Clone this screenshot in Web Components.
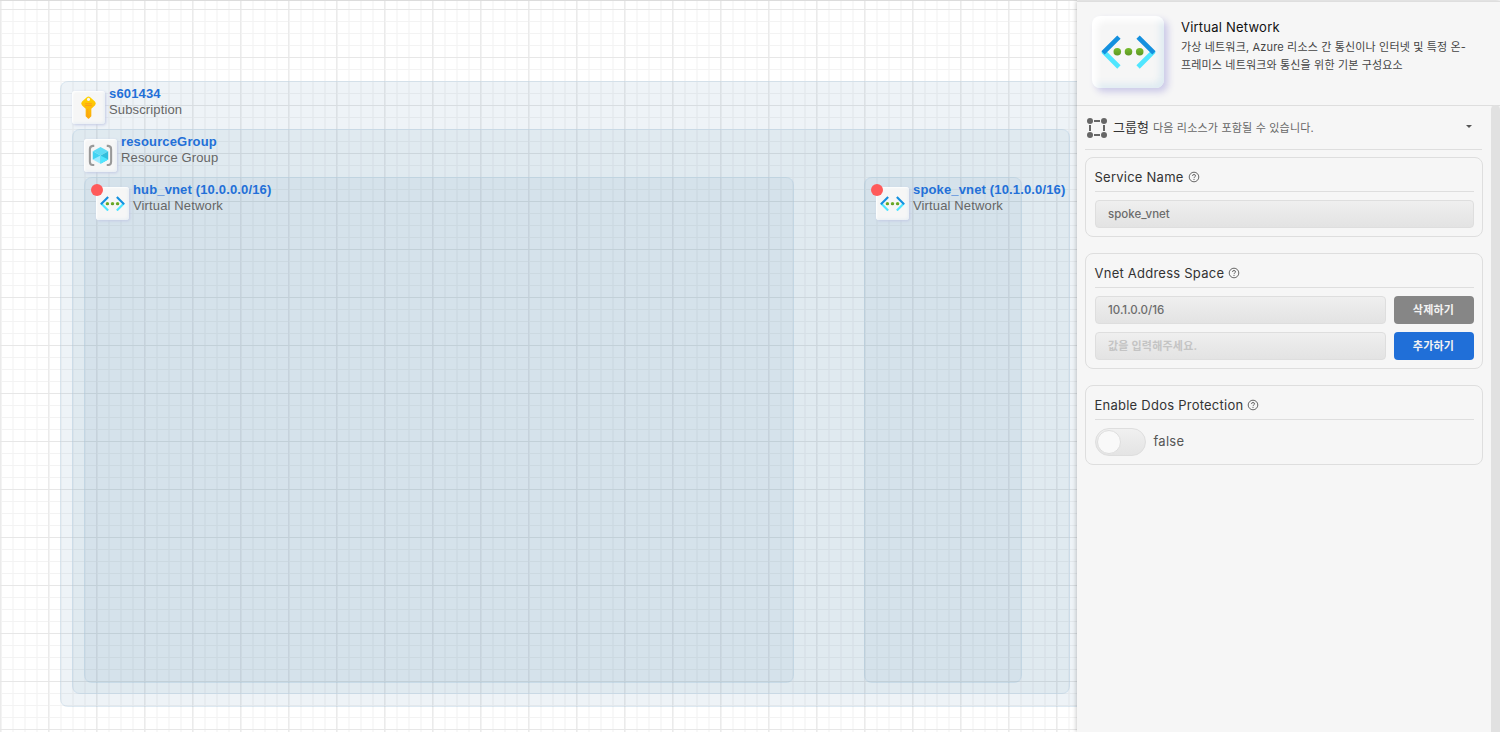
<!DOCTYPE html>
<html lang="ko">
<head>
<meta charset="utf-8">
<title>Virtual Network</title>
<style>
body{margin:0;width:1500px;height:732px;overflow:hidden;font-family:Inter,"Noto Sans CJK KR",sans-serif}
</style>
</head>
<body>
<architect-app></architect-app>
<script>
const define = (name, render) => customElements.define(name, class extends HTMLElement {
  constructor() {
    super();
    this.attachShadow({mode: 'open'});
  }
  connectedCallback() {
    const t = document.createElement('template');
    t.innerHTML = '<style>*{box-sizing:border-box}</style>' + render(this);
    this.shadowRoot.replaceChildren(t.content.cloneNode(true));
  }
});

const glyphs = {
  vnet: `<svg viewBox="0 0 54 34"><defs><linearGradient id="g" x1="0" y1="0" x2="0" y2="1"><stop offset="0" stop-color="#76bc2d"/><stop offset="1" stop-color="#5e9624"/></linearGradient></defs>
    <g fill="none" stroke-width="4.6" stroke-linecap="butt" stroke-linejoin="round"><path d="M17.6 31.4 2 15.8M36.4 31.4 52 15.8" stroke="#50e6ff"/><path d="M17.6 2 2 17.6M36.4 2 52 17.6" stroke="#1490df"/></g>
    <g fill="url(#g)"><circle cx="16" cy="16.5" r="3.7"/><circle cx="27" cy="16.5" r="3.7"/><circle cx="38" cy="16.5" r="3.7"/></g></svg>`,
  key: `<svg viewBox="0 0 18 26"><defs><linearGradient id="k" x1="0" y1="0" x2="0" y2="1"><stop offset="0" stop-color="#ffd400"/><stop offset="1" stop-color="#fba80c"/></linearGradient></defs>
    <path fill="url(#k)" fill-rule="evenodd" d="M7.2 2.4Q9 1 10.8 2.4L15.8 7Q17.6 9 16 10.8L12 14.6V22.6L9.6 25Q9 25.5 8.4 25L6 22.6V14.6L2 10.8Q.4 9 2.2 7ZM9 3a1.7 1.7 0 1 0 .01 0Z"/><path d="M5.4 9.3h7.2M5.4 11.2h7.2" stroke="#ff9a1a" stroke-width="1"/><path d="M8.1 15v8" stroke="#ff9f10" stroke-width=".9"/></svg>`,
  group: `<svg viewBox="0 0 24 22"><path d="M6 1.8H4.6Q1.8 2 1.8 5V17Q1.8 20 4.6 20.2H6M18 1.8H19.4Q22.2 2 22.2 5V17Q22.2 20 19.4 20.2H18" fill="none" stroke="#999" stroke-width="2"/>
    <path d="M12 3 19.4 7 12 11 4.6 7Z" fill="#5fdcf5"/><path d="M4.6 7 12 11V19L4.6 15Z" fill="#9cebff"/><path d="M19.4 7 12 11V19L19.4 15Z" fill="#32bedd"/><path d="M4.6 7 12 11 4.6 15Z" fill="#40d3f2"/><path d="M12 11 19.4 15 12 19Z" fill="#50e6ff"/></svg>`
};

define('service-icon', el => {
  const big = el.hasAttribute('large');
  const w = {vnet: big ? 55 : 25, key: 17, group: 25}[el.getAttribute('name')];
  return `<style>
  :host{display:flex;align-items:center;justify-content:center;flex:none;background:#f6f6f6;
    width:${big ? 72 : 33}px;height:${big ? 72 : 33}px;border-radius:${big ? 8 : 3}px;
    box-shadow:${big ? '4px 4px 7px #cbc9e8,inset 5px 5px 6px #fff,inset -4px -4px 7px #deebf2' : '1px 1px 3px #c3cae4,inset 1px 1px 2px #fff,inset -1px -1px 3px #e6eef4'}}
  svg{display:block;width:${w}px}
  </style>${glyphs[el.getAttribute('name')]}`;
});

define('resource-node', el => {
  const a = n => el.getAttribute(n);
  return `<style>
  :host{display:block;position:absolute;left:${a('x')}px;top:${a('y')}px;width:${a('w')}px;height:${a('h')}px;box-sizing:border-box;
    background:rgba(85,138,175,${a('tint')});border:1px solid rgba(150,190,220,.2);border-radius:8px}
  .head{display:flex;gap:4px;padding:9px 0 0 11px}
  .text{font:13px/16px "Liberation Sans",Arial,sans-serif;color:#666;white-space:nowrap;margin-top:-5px}
  b{display:block;color:#2370d8;letter-spacing:.15px}
  span{display:block;letter-spacing:.14px}
  i{position:absolute;left:6px;top:6px;width:12px;height:12px;border-radius:50%;background:#ff5a5a}
  </style><div class="head"><service-icon name="${a('icon')}"></service-icon><div class="text"><b>${a('label')}</b><span>${a('kind')}</span></div></div>${el.hasAttribute('alert') ? '<i></i>' : ''}`;
});

define('diagram-canvas', () => `<style>
  :host{display:block;position:relative;overflow:hidden;background:#fff;border-top:1px solid #dcdcdc}
  .grid{position:absolute;inset:0;background:
    linear-gradient(#e7e7e7 1px,transparent 1px) 0 8px/48px 48px,
    linear-gradient(90deg,#ebebeb 1px,#f3f3f3 1px 2px,transparent 2px) 0 0/48px 48px,
    linear-gradient(#f3f3f3 1px,transparent 1px) 0 8px/12px 12px,
    linear-gradient(90deg,#f8f8f8 2px,transparent 2px) 0 0/12px 12px}
  </style><div class="grid"></div>
  <resource-node x="60" y="80" w="1030" h="626" tint=".1" icon="key" label="s601434" kind="Subscription"></resource-node>
  <resource-node x="72" y="128" w="998" h="565" tint=".085" icon="group" label="resourceGroup" kind="Resource Group"></resource-node>
  <resource-node x="84" y="176" w="710" h="506" tint=".075" icon="vnet" label="hub_vnet (10.0.0.0/16)" kind="Virtual Network" alert></resource-node>
  <resource-node x="864" y="176" w="158" h="506" tint=".075" icon="vnet" label="spoke_vnet (10.1.0.0/16)" kind="Virtual Network" alert></resource-node>`);

define('panel-header', () => `<style>
  :host{display:flex;gap:17px;height:104px;padding:14px 15px 0;border-bottom:1px solid #dedede}
  h1{margin:3px 0 3px;font-size:13px;line-height:16px;font-weight:400;color:#111;letter-spacing:.22px}
  p{margin:0;font-size:11px;line-height:18px;color:#444;letter-spacing:.16px;white-space:nowrap}
  </style><service-icon large name="vnet"></service-icon><div><h1><slot name="title"></slot></h1><p><slot></slot></p></div>`);

define('group-summary', () => `<style>
  :host{display:flex;align-items:center;height:44px;border-bottom:1px solid #dedede;padding:0 10px 0 1px;margin-right:1px;white-space:nowrap}
  svg{flex:none;margin-top:1px}
  b{font-weight:400;font-size:13px;color:#333;margin:-3px 4px 0 5px}
  span{font-size:11px;color:#666;flex:1;margin-top:-2px;letter-spacing:.2px}
  .arrow{border:3.5px solid transparent;border-top-color:#555;border-bottom:0;margin-top:-2px}
  </style><svg width="22" height="22" viewBox="0 0 22 22" fill="#666"><circle cx="4" cy="4" r="3"/><circle cx="18" cy="4" r="3"/><circle cx="4" cy="18" r="3"/><circle cx="18" cy="18" r="3"/><path d="M8 3h6v2H8zM8 17h6v2H8zM3 8h2v6H3zM17 8h2v6h-2z"/></svg>
  <b>그룹형</b><span>다음 리소스가 포함될 수 있습니다.</span><div class="arrow"></div>`);

define('setting-card', el => `<style>
  :host{display:block;box-sizing:border-box;border:1px solid #dedede;border-radius:8px;padding:8px 8px 8px 9px}
  header{display:flex;align-items:center;gap:4px;height:26px;padding-bottom:3px;border-bottom:1px solid #dedede;margin-bottom:8px;font-size:13px;color:#333;letter-spacing:.24px}
  .body{display:grid;gap:8px}
  span{margin-left:-.5px}
  </style><header><span>${el.getAttribute('label')}</span><svg width="12" height="12" viewBox="0 0 12 12" fill="none" stroke="#555"><circle cx="6" cy="6" r="4.8" stroke-width=".9"/><path d="M4.5 4.9Q4.5 3.5 6 3.5T7.5 4.9Q7.5 5.5 6.7 6 6 6.4 6 7" stroke-width=".9"/><path d="M6 7.9v1" stroke-width="1"/></svg></header><div class="body"><slot></slot></div>`);

define('text-field', el => `<style>
  :host{display:flex;align-items:center;flex:1;box-sizing:border-box;height:28px;padding:0 12px 1px;border:1px solid #dedede;border-radius:4px;background:linear-gradient(#efefef,#e3e3e3);font-size:11.5px;font-weight:500;color:#6c6c6c}
  :host([empty]){padding-bottom:2px;font-size:11px;font-weight:700;letter-spacing:.22px;color:#c4c4c4}
  </style><slot></slot>`);

define('action-button', el => `<style>
  :host{display:flex;align-items:center;justify-content:center;flex:none;box-sizing:border-box;width:80px;height:28px;padding:0 1px 2px 0;border-radius:4px;background:${el.hasAttribute('primary') ? '#206fd8' : '#868686'};color:#f3f3f3;font-size:11px;font-weight:700;letter-spacing:.2px}
  </style><slot></slot>`);

define('field-row', () => `<style>:host{display:flex;gap:8px}</style><slot></slot>`);

define('toggle-switch', () => `<style>
  :host{display:flex;align-items:center;gap:7px;height:28px;font-size:13px;color:#555;letter-spacing:.25px}
  .track{width:51px;height:28px;border:1px solid #dedede;border-radius:14px;background:linear-gradient(#f0f0f0,#e4e4e4);padding:1px}
  .knob{width:24px;height:24px;border-radius:50%;background:#f9f9f9;border:1px solid #dedede}
  .value{margin-top:-2px;padding-left:.5px}
  </style><div class="track"><div class="knob"></div></div><div class="value"><slot></slot></div>`);

define('property-panel', () => `<style>
  :host{display:flex;flex-direction:column;background:#f6f6f6;border-top:1px solid #dedede;box-shadow:-1px 0 4px rgba(0,0,0,.2);margin-top:1px;position:relative}
  .content{display:flex;flex:1}
  .list{flex:1;padding:0 8px}
  .cards{display:grid;gap:16px;padding-top:7px}
  .bar{width:9px;margin-top:-1px;background:#e1e1e1;border-radius:5px 5px 0 0}
  </style>
  <panel-header><span slot="title">Virtual Network</span>가상 네트워크, Azure 리소스 간 통신이나 인터넷 및 특정 온-<br>프레미스 네트워크와 통신을 위한 기본 구성요소</panel-header>
  <div class="content"><div class="list"><group-summary></group-summary><div class="cards">
    <setting-card label="Service Name"><text-field>spoke_vnet</text-field></setting-card>
    <setting-card label="Vnet Address Space">
      <field-row><text-field>10.1.0.0/16</text-field><action-button>삭제하기</action-button></field-row>
      <field-row><text-field empty>값을 입력해주세요.</text-field><action-button primary>추가하기</action-button></field-row>
    </setting-card>
    <setting-card label="Enable Ddos Protection"><toggle-switch>false</toggle-switch></setting-card>
  </div></div><div class="bar"></div></div>`);

define('architect-app', () => `<style>
  :host{display:grid;grid-template-columns:1077px 423px;height:732px;background:#f6f6f6}
  </style><diagram-canvas></diagram-canvas><property-panel></property-panel>`);
</script>
</body>
</html>
